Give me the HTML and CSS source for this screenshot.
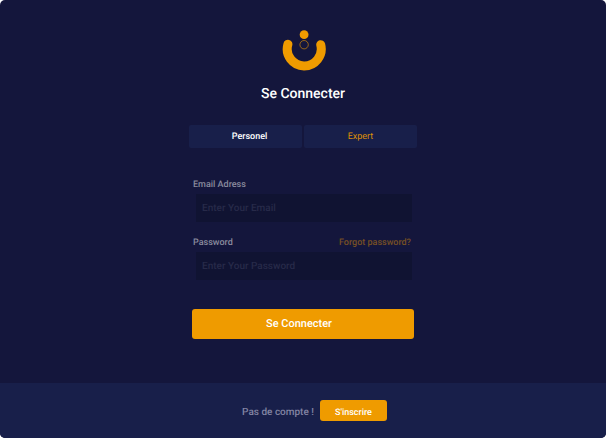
FILE: index.html
```html
<!DOCTYPE html>
<html lang="fr">
<head>
<meta charset="utf-8">
<title>Se Connecter</title>
<link rel="stylesheet" href="styles.css">
</head>
<body>
<div class="card">
  <main class="main">
    <svg class="logo" width="44" height="42" viewBox="0 0 44 42">
      <path d="M5.9 15.2A17 17 0 1 0 38.7 15.7" fill="none" stroke="#ef9b00" stroke-width="9" stroke-linecap="round"/>
      <circle cx="22.1" cy="5.7" r="4.4" fill="#ef9b00"/>
      <circle cx="22.1" cy="15.7" r="4.2" fill="none" stroke="#ef9b00" stroke-width=".6"/>
    </svg>
    <h1 class="title">Se Connecter</h1>
    <div class="tabs">
      <button class="tab tab-active">Personel</button>
      <button class="tab">Expert</button>
    </div>
    <form class="form">
      <div class="field">
        <div class="labels"><label for="email">Email Adress</label></div>
        <input id="email" class="input" type="email" placeholder="Enter Your Email">
      </div>
      <div class="field">
        <div class="labels"><label for="password">Password</label><a class="forgot">Forgot password?</a></div>
        <input id="password" class="input" type="password" placeholder="Enter Your Password">
      </div>
    </form>
    <button class="submit">Se Connecter</button>
  </main>
  <footer class="footer">
    <span class="hint">Pas de compte !</span>
    <button class="signup">S'inscrire</button>
  </footer>
</div>
</body>
</html>
```
FILE: styles.css
```css
* { box-sizing: border-box; }
body {
  margin: 0;
  background: #fff;
  font-family: Roboto, sans-serif;
  font-weight: 500;
  text-rendering: geometricPrecision;
}
button {
  border: 0;
  padding: 0;
  font: inherit;
  color: #fff;
  text-rendering: inherit;
}
.card {
  width: 606px;
  height: 438px;
  display: flex;
  flex-direction: column;
  border-radius: 5px;
  overflow: hidden;
  background: #14163c;
}
.main {
  height: 383px;
  padding-top: 29px;
  display: flex;
  flex-direction: column;
  align-items: center;
}
.logo { margin-left: 2px; flex: none; }
.title {
  margin: 13px 0 0;
  font-size: 14px;
  line-height: 20px;
  font-weight: 500;
  color: #fff;
}
.tabs {
  width: 228px;
  margin-top: 21px;
  display: flex;
  gap: 2px;
}
.tab {
  width: 113px;
  height: 23px;
  border-radius: 2px;
  background: #181f4a;
  font-size: 9px;
  font-weight: 400;
  color: #df9006;
}
.tab-active { font-weight: 500; color: #fff; padding-left: 8px; }
.form {
  width: 219px;
  margin: 31px 1px 0 0;
  display: flex;
  flex-direction: column;
  gap: 15px;
}
.field { display: flex; flex-direction: column; }
.labels {
  height: 15px;
  padding-right: 1px;
  display: flex;
  justify-content: space-between;
  font-size: 9px;
  line-height: 12px;
  color: #8a8b9e;
}
.forgot { color: #775024; }
.input {
  height: 28px;
  margin-left: 3px;
  padding: 1px 6px 0;
  border: 0;
  background: #101332;
  font: 500 10px Roboto, sans-serif;
  text-rendering: inherit;
}
.input::placeholder { color: #272a49; opacity: 1; }
.submit {
  width: 222px;
  height: 30px;
  margin-top: 29px;
  padding: 0 8px 2px 0;
  border-radius: 3px;
  background: #ef9b00;
  font-size: 11px;
}
.footer {
  height: 55px;
  padding-left: 23px;
  display: flex;
  align-items: center;
  justify-content: center;
  gap: 6px;
  background: #181f4a;
}
.hint { padding-top: 3px; font-size: 10px; color: #8284a3; }
.signup {
  width: 67px;
  height: 21px;
  padding-top: 4px;
  border-radius: 3px;
  background: #ef9b00;
  font-size: 9px;
}
```
